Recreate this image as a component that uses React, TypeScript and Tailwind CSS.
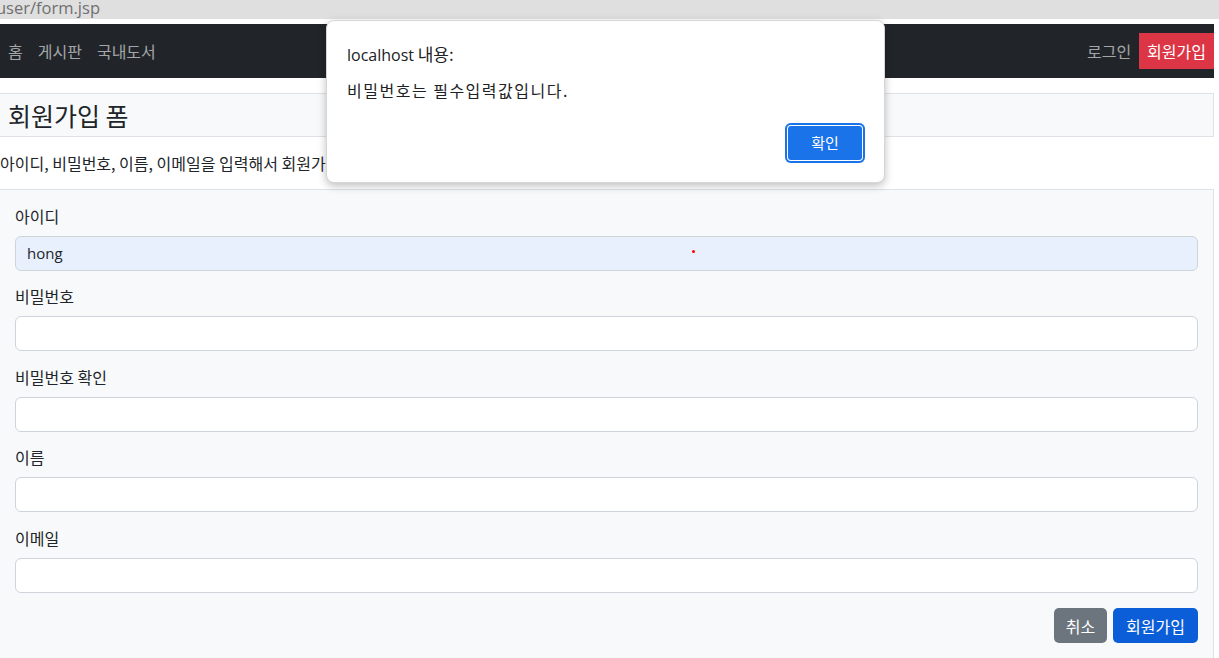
import React from "react";

const KR = { fontFamily: '"Noto Sans CJK KR", "Noto Sans", sans-serif' };

function Field({ label, value, autofill, marker }: { label: string; value?: string; autofill?: boolean; marker?: boolean }) {
  return (
    <div className="mb-[13.5px]">
      <label className="block text-[16px] leading-[24px] text-[#212529] mb-[8px]">{label}</label>
      <div className="relative">
        <input
          type="text"
          defaultValue={value}
          className={`w-full h-[35px] px-[11px] text-[15px] text-[#212529] rounded-[6px] border border-[#ced4da] outline-none ${autofill ? "bg-[#e8f0fe] border-[#c5cfdc]" : "bg-white"}`}
          style={{ fontFamily: '"Open Sans", "Noto Sans", sans-serif' }}
        />
        {marker && <span className="absolute left-[677px] top-[14px] w-[3px] h-[3px] rounded-full bg-[#ff0000]" />}
      </div>
    </div>
  );
}

export default function App() {
  return (
    <div className="relative w-[1219px] h-[658px] overflow-hidden bg-white" style={KR}>
      {/* browser address strip */}
      <div className="h-[19px] bg-[#dfdfdf] overflow-hidden">
        <div className="-ml-[4px] -mt-[4px] text-[16.5px] text-[#707070]" style={{ fontFamily: '"Open Sans", sans-serif' }}>
          user/form.jsp
        </div>
      </div>
      <div className="h-[5px] bg-white" />

      <div className="w-[1214px]">
        {/* navbar */}
        <nav className="h-[54px] bg-[#212529] flex items-center justify-between">
          <div className="flex items-center gap-[15px] pl-2 text-[16px] text-[#a3a5a8]">
            <span>홈</span>
            <span>게시판</span>
            <span>국내도서</span>
          </div>
          <div className="flex items-center text-[16px]">
            <span className="text-[#a3a5a8] mr-[8px]">로그인</span>
            <span className="h-[36px] px-2 flex items-center bg-[#dc3545] text-white">회원가입</span>
          </div>
        </nav>

        {/* header */}
        <div className="mt-[15px] h-[44px] bg-[#f8f9fa] border-y border-r border-[#dee2e6] flex items-center pl-2">
          <h1 className="text-[25px] text-[#212529] leading-none">회원가입 폼</h1>
        </div>

        <p className="h-[52px] flex items-center text-[16px] text-[#212529]">
          아이디, 비밀번호, 이름, 이메일을 입력해서 회원가입하세요.
        </p>

        {/* form */}
        <form className="bg-[#f8f9fa] border-t border-r border-[#dee2e6] px-[15px] pt-[13.5px] pb-[20px]">
          <Field label="아이디" value="hong" autofill marker />
          <Field label="비밀번호" />
          <Field label="비밀번호 확인" />
          <Field label="이름" />
          <Field label="이메일" />
          <div className="flex justify-end gap-[6px] pt-[2px]">
            <button type="button" className="h-[35px] px-[12px] rounded-[5px] bg-[#6c757d] text-white text-[16px]">취소</button>
            <button type="button" className="h-[35px] px-[13px] rounded-[5px] bg-[#0b5ed7] text-white text-[16px]">회원가입</button>
          </div>
        </form>
      </div>

      {/* alert dialog */}
      <div className="absolute left-[326px] top-[20px] w-[559px] h-[163px] bg-white rounded-[8px] border border-[#d6d6d6] shadow-[0_3px_8px_rgba(0,0,0,0.25)] pl-[20px] pr-[19px] pt-[20px]">
        <div className="text-[16px] text-[#202124] leading-[26px]">
          <span style={{ fontFamily: '"Open Sans", "Noto Sans CJK KR", sans-serif' }}>localhost</span> <span className="text-[17px]">내용:</span>
        </div>
        <div className="mt-[11px] text-[16px] tracking-[1.5px] text-[#202124] leading-[22px]">비밀번호는 필수입력값입니다.</div>
        <div className="flex justify-end mt-[22px]">
          <button
            type="button"
            className="w-[80px] h-[40px] rounded-[6px] bg-[#1a73e8] text-white text-[15px] shadow-[inset_0_0_0_2px_#1a73e8,inset_0_0_0_3px_#ffffff]"
          >
            확인
          </button>
        </div>
      </div>
    </div>
  );
}
